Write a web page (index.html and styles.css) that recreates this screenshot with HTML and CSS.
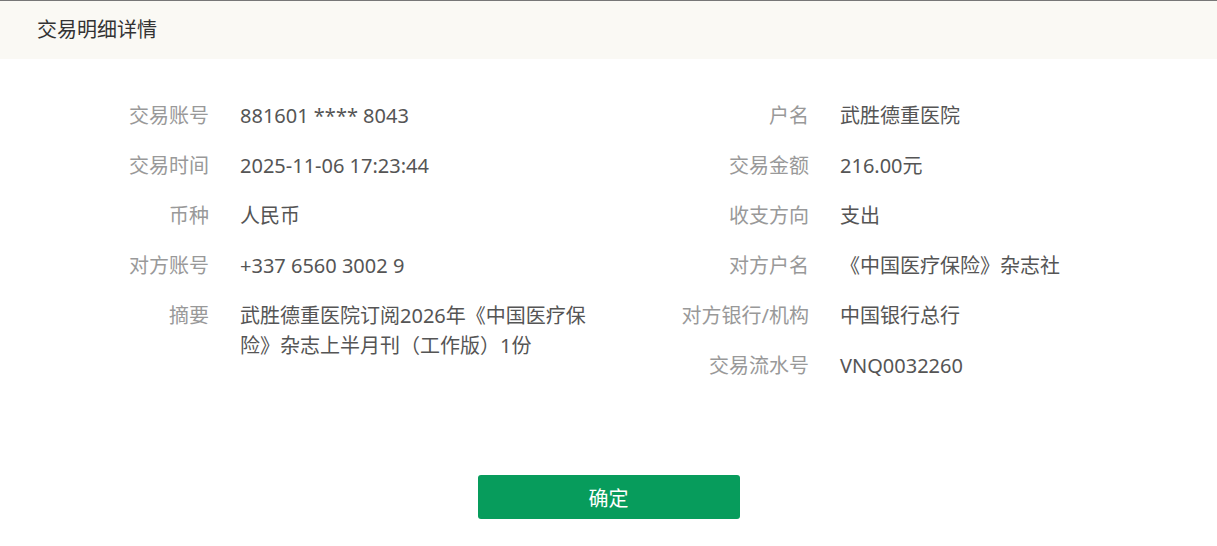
FILE: index.html
```html
<!DOCTYPE html>
<html lang="zh-CN">
<head>
  <meta charset="UTF-8">
  <meta name="viewport" content="width=device-width, initial-scale=1.0">
  <title>交易明细详情</title>
  <link rel="stylesheet" href="styles.css">
</head>
<body>
  <div class="dialog">
    <div class="dialog-header">交易明细详情</div>

    <div class="dialog-body">
      <!-- 左列 -->
      <div class="col">
        <div class="row"><span class="label">交易账号</span><span class="value">881601 **** 8043</span></div>
        <div class="row"><span class="label">交易时间</span><span class="value">2025-11-06 17:23:44</span></div>
        <div class="row"><span class="label">币种</span><span class="value">人民币</span></div>
        <div class="row"><span class="label">对方账号</span><span class="value">+337 6560 3002 9</span></div>
        <div class="row"><span class="label">摘要</span><span class="value">武胜德重医院订阅2026年《中国医疗保险》杂志上半月刊（工作版）1份</span></div>
      </div>

      <!-- 右列 -->
      <div class="col">
        <div class="row"><span class="label">户名</span><span class="value">武胜德重医院</span></div>
        <div class="row"><span class="label">交易金额</span><span class="value">216.00元</span></div>
        <div class="row"><span class="label">收支方向</span><span class="value">支出</span></div>
        <div class="row"><span class="label">对方户名</span><span class="value">《中国医疗保险》杂志社</span></div>
        <div class="row"><span class="label">对方银行/机构</span><span class="value">中国银行总行</span></div>
        <div class="row"><span class="label">交易流水号</span><span class="value">VNQ0032260</span></div>
      </div>
    </div>

    <div class="dialog-footer">
      <button type="button" class="btn-ok">确定</button>
    </div>
  </div>
</body>
</html>
```

FILE: styles.css
```css
body {
  margin: 0;
  font-family: "Noto Sans", "Noto Sans CJK SC", sans-serif;
  background: #fff;
}
.dialog {
  border-top: 1px solid #777;
}
.dialog-header {
  height: 58px;
  line-height: 58px;
  padding-left: 37px;
  background: #faf9f4;
  font-size: 20px;
  color: #333;
}
.dialog-body {
  display: flex;
  padding: 32px 0 0 39px;
}
.col {
  width: 600px;
  flex-shrink: 0;
}
.row {
  display: flex;
  padding: 10px 0;
  line-height: 30px;
  font-size: 20px;
}
.label {
  width: 170px;
  flex-shrink: 0;
  text-align: right;
  color: #999;
}
.value {
  width: 356px;
  margin-left: 31px;
  color: #555;
}
.dialog-footer {
  display: flex;
  justify-content: center;
  padding: 84px 0 27px;
}
.btn-ok {
  width: 262px;
  height: 44px;
  border: none;
  border-radius: 3px;
  background: #079c5c;
  color: #fff;
  font-family: inherit;
  font-size: 20px;
  cursor: pointer;
}
```
